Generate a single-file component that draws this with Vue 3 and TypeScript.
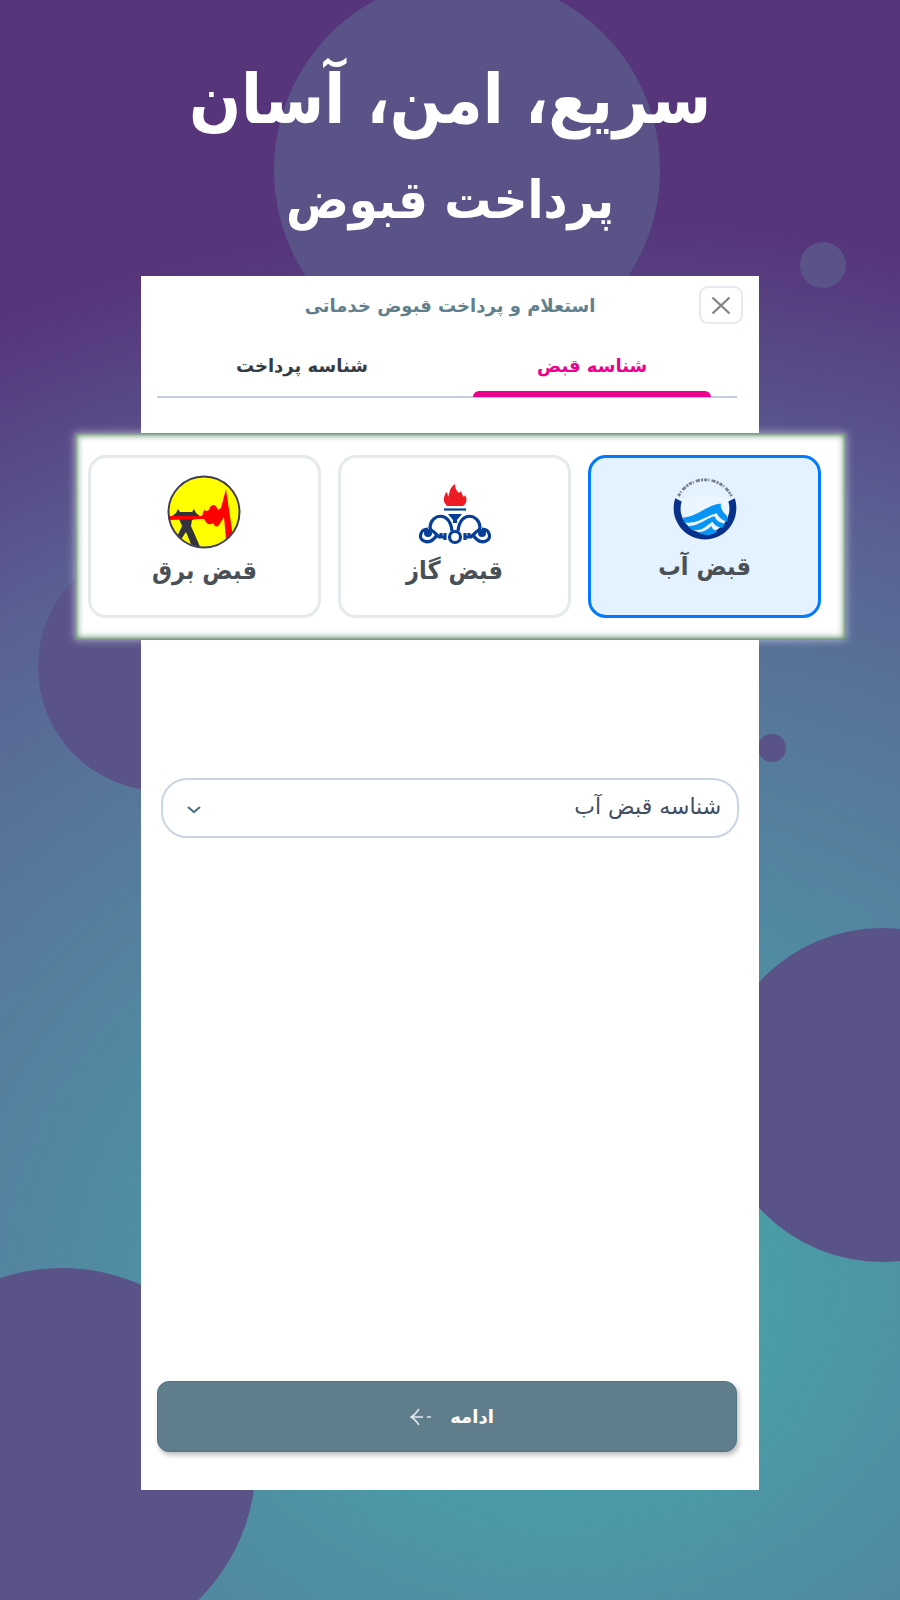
<script setup lang="ts">
import { ref } from 'vue'

type Bill = 'water' | 'gas' | 'power'
const bills: { id: Bill; label: string }[] = [
  { id: 'water', label: 'قبض آب' },
  { id: 'gas', label: 'قبض گاز' },
  { id: 'power', label: 'قبض برق' },
]
const selected = ref<Bill>('water')
const tab = ref<'bill' | 'payment'>('bill')
const kind = ref('water')
</script>

<template>
  <div class="page" dir="rtl">
    <svg class="bubbles" viewBox="0 0 900 1600" preserveAspectRatio="none" aria-hidden="true">
      <g fill="#5a5388">
        <circle cx="467" cy="170" r="193" />
        <circle cx="823" cy="265" r="23" />
        <circle cx="162" cy="667" r="124" />
        <circle cx="772" cy="748" r="14" />
        <circle cx="882" cy="1095" r="167" />
        <circle cx="62" cy="1462" r="194" />
      </g>
    </svg>

    <header class="hero">
      <h1>سریع، امن، آسان</h1>
      <h2>پرداخت قبوض</h2>
    </header>

    <main class="panel">
      <div class="titlebar">
        <button class="close" type="button" aria-label="بستن">
          <svg viewBox="0 0 20 20" width="20" height="20"><path d="M1.500 2.500 18.500 18.500M18.500 2.500 1.500 18.500" stroke="#858585" stroke-width="2.400" fill="none" /></svg>
        </button>
        <h3>استعلام و پرداخت قبوض خدماتی</h3>
      </div>

      <nav class="tabs" role="tablist">
        <button type="button" role="tab" :aria-selected="tab === 'bill'" :class="{ active: tab === 'bill' }" @click="tab = 'bill'">شناسه قبض</button>
        <button type="button" role="tab" :aria-selected="tab === 'payment'" :class="{ active: tab === 'payment' }" @click="tab = 'payment'">شناسه پرداخت</button>
      </nav>

      <section class="strip">
        <button v-for="b in bills" :key="b.id" type="button" class="card" :class="[b.id, { chosen: selected === b.id }]" :aria-pressed="selected === b.id" @click="selected = b.id">
          <svg v-if="b.id === 'water'" viewBox="0 0 64 64" width="68" height="68" aria-hidden="true">
            <path d="M7 18A28 28 0 0 1 57 18" fill="none" stroke="#77818c" stroke-width="2.600" stroke-dasharray="3 1 1 2 4 1 2 1" />
            <path d="M8 21A27 27 0 1 0 56 21Q32 14 8 21Z" fill="#ebf5ff" />
            <path d="M4 20A29.500 29.500 0 1 0 60 20L54 23A23 23 0 1 1 10 23Z" fill="#07318a" />
            <path d="M11 38C24 38 34 26 47 25Q46 31 53 37V42Q46 40 43 34C34 36 25 44 13 43Z" fill="#0795f5" />
            <path d="M16 46C26 47 34 38 41 37Q43 43 51 44L48 48Q42 47 39 42C34 45 30 51 20 50Z" fill="#0795f5" />
            <path d="M25 52Q32 52 38 46Q39 50 44 51Q34 58 25 52Z" fill="#0795f5" />
          </svg>
          <svg v-else-if="b.id === 'gas'" viewBox="0 0 72 62" width="72" height="62" aria-hidden="true">
            <path d="M28 23C22 17 26 13 27 9Q29 10 29 14C31 10 30 5 36 1Q36 7 40 10L42 8Q43 12 45 14L46 12C49 17 47 21 44 23Z" fill="#ed1c24" />
            <path d="M25 26.500H47" stroke="#073f98" stroke-width="2.200" />
            <path d="M29 31H43L38 37V40H34V37Z" fill="#073f98" />
            <g fill="none" stroke="#073f98" stroke-width="3.200">
              <circle cx="36" cy="54" r="5.500" />
              <path d="M33 48C31 27 12 31 11 44Q11 47 15 49L20 54H26M22 50V54M26 50V57M39 48C41 27 60 31 61 44Q61 47 57 49L52 54H46M50 50V54M46 50V57" />
              <path d="M9 46C1 46-1 56 5 58Q12 61 18 52M63 46C71 46 73 56 67 58Q60 61 54 52" />
            </g>
            <circle cx="9" cy="50" r="4" fill="#073f98" /><circle cx="63" cy="50" r="4" fill="#073f98" />
          </svg>
          <svg v-else viewBox="0 0 74 74" width="74" height="74" aria-hidden="true">
            <defs><clipPath id="disc"><circle cx="37" cy="37" r="35" /></clipPath></defs>
            <circle cx="37" cy="37" r="35.500" fill="#ff0" />
            <g clip-path="url(#disc)">
              <path d="M4 42 9 38 11 34 13 37H25L27 34 29 38 34 42 25 45 24 51 28 60 34 74H26L19 57 13 66H8L15 51 12 44Z" fill="#34323c" />
              <path d="M2 41H35L37 35Q42 38 43 32Q48 27 51 35L54 33 59 14 66 62 59 64 57 42 52 50Q49 54 46 48Q41 52 37 44L2 45Z" fill="red" />
            </g>
            <circle cx="37" cy="37" r="35.500" fill="none" stroke="#403c58" stroke-width="2" />
          </svg>
          <span>{{ b.label }}</span>
        </button>
      </section>

      <div class="field">
        <select v-model="kind" aria-label="نوع شناسه">
          <option value="water">شناسه قبض آب</option>
        </select>
        <svg class="chevron" viewBox="0 0 14 10" width="14" height="10" aria-hidden="true"><path d="M1 2 7 7 13 2" fill="none" stroke="#527384" stroke-width="2.200" /></svg>
      </div>

      <button class="next" type="button">
        <span>ادامه</span>
        <svg viewBox="0 0 22 18" width="22" height="18" aria-hidden="true"><path d="M9 1Q5 7 1 9Q5 11 9 17M1 9H13M17 9H21" fill="none" stroke="#e2e9ed" stroke-width="1.500" /></svg>
      </button>
    </main>
  </div>
</template>

<style>
body { margin: 0; }
</style>

<style scoped>
* { box-sizing: border-box; }
.page {
  position: relative;
  min-height: 100vh;
  overflow: hidden;
  padding-bottom: 110px;
  display: flex;
  flex-direction: column;
  align-items: center;
  font-family: "DejaVu Sans", sans-serif;
  background: radial-gradient(1296px 1080px at 62% 81%, #47a3a9 0, #47a2a8 11%, #5483a0 44%, #577599 59%, #5a5f92 76%, #56357b 100%);
}
.bubbles { position: absolute; inset: 0; width: 100%; height: 100%; }
button, select { font-family: inherit; cursor: pointer; }
.hero {
  position: relative;
  height: 276px;
  padding-top: 44px;
  color: #fff;
  text-align: center;
  font-family: "DejaVu Sans Condensed", "DejaVu Sans", sans-serif;
}
h1, h2, h3 { margin: 0; }
h1 { font-size: 68px; line-height: 112px; }
h2 { font-size: 52px; line-height: 88px; }
.panel {
  position: relative;
  width: 68.7%;
  flex: 1;
  display: flex;
  flex-direction: column;
  background: #fff;
}
.titlebar {
  display: flex;
  align-items: center;
  height: 58px;
  padding: 0 16px;
}
.titlebar h3 { flex: 1; padding-left: 44px; text-align: center; color: #617f8d; font-size: 18px; }
.close {
  display: grid;
  place-items: center;
  width: 44px;
  height: 38px;
  padding: 0;
  border: 2px solid #e4e9f2;
  border-radius: 9px;
  background: #fff;
}
.tabs {
  display: grid;
  grid-template-columns: 1fr 1fr;
  height: 64px;
  margin: 0 22px 0 16px;
  border-bottom: 2px solid #c5cfdd;
}
.tabs button {
  position: relative;
  padding: 0;
  border: 0;
  background: none;
  color: #363c45;
  font-size: 18px;
  font-weight: 700;
}
.tabs .active { color: #ec008c; }
.tabs .active::after {
  content: "";
  position: absolute;
  inset: auto 26px -1px;
  height: 6px;
  border-radius: 6px 6px 0 0;
  background: #ec008c;
}
.strip {
  display: grid;
  grid-template-columns: repeat(3, 1fr);
  gap: 17px;
  height: 207px;
  margin: 35px -87px 0 -66px;
  padding: 22px 25px 22px 13px;
  background: #fff;
  box-shadow: inset 0 0 3px 1px #6b8f74, inset 0 0 7px 2px #5f8a68, 0 0 8px #ffffff90;
}
.card {
  display: flex;
  flex-direction: column;
  align-items: center;
  justify-content: center;
  padding: 0;
  border: 3px solid #e4eaee;
  border-radius: 18px;
  background: #fff;
  color: #4a5058;
  font-family: "DejaVu Sans Condensed", "DejaVu Sans", sans-serif;
  font-size: 25px;
  font-weight: 700;
  line-height: 44px;
}
.card.chosen { border-color: #007bff; background: #e4f1ff; }
.card.water { padding-bottom: 8px; }
.card.gas { padding-top: 2px; }
.card.gas svg { margin-bottom: 4px; }
.card.power { padding-bottom: 5px; }
.field { position: relative; margin: 138px 20px 0 20px; }
select {
  display: block;
  width: 100%;
  height: 60px;
  padding: 0 16px 2px 40px;
  appearance: none;
  border: 2px solid #cad5e2;
  border-radius: 26px;
  background: #fff;
  color: #424d60;
  font-size: 22px;
  line-height: 36px;
}
.chevron { position: absolute; left: 26px; top: 27px; pointer-events: none; }
.next {
  display: flex;
  align-items: center;
  justify-content: center;
  gap: 18px;
  height: 71px;
  margin: auto 22px 38px 16px;
  padding: 0 0 0 10px;
  border: 1px solid #537383;
  border-radius: 12px;
  background: #607d8b;
  box-shadow: 2px 3px 5px #0004;
  color: #fff;
  font-size: 18px;
  font-weight: 700;
}
</style>
